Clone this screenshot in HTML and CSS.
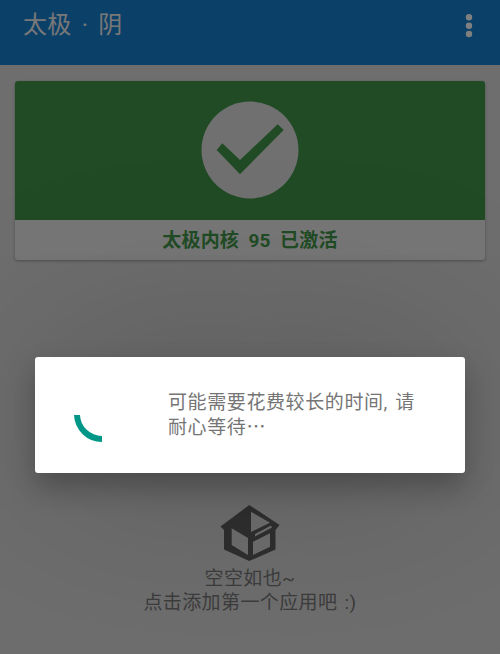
FILE: index.html
```html
<!DOCTYPE html>
<html lang="zh-CN">
<head>
<meta charset="utf-8">
<title>太极 · 阴</title>
<link rel="stylesheet" href="styles.css">
</head>
<body>
<div class="screen">
  <header class="appbar">
    <h1 class="title">太极 · 阴</h1>
    <svg class="menu" width="12" height="28" viewBox="0 0 12 28"><circle cx="6" cy="5.300" r="3.200"/><circle cx="6" cy="13.700" r="3.200"/><circle cx="6" cy="22" r="3.200"/></svg>
  </header>
  <main class="content">
    <section class="card">
      <div class="card-hero">
        <svg class="check" width="98" height="98" viewBox="0 0 98 98"><circle class="check-disc" cx="49" cy="49" r="48.500"/><polygon class="check-mark" points="15.700,49 21.300,42.300 39,59 76.700,23.300 82.700,29 39,73.300"/></svg>
      </div>
      <div class="card-status">太极内核 95 已激活</div>
    </section>
    <div class="empty">
      <svg class="box" width="62" height="60" viewBox="219 503 62 60">
        <path class="box-shape" fill-rule="evenodd" d="M249.300 505 L279.500 525 L275.500 530 V549.500 L249.300 561 L224 549.500 V530 L220.500 526.500 Z M251 511.700 L270 522.700 L251 532 Z M231.700 528.300 L248 538 V555 L231.700 545 Z M255 534 L271 525.500 L272 527.500 L255 536.500 Z M253 541.700 L270 533.300 V546.700 L253 555 Z"/>
      </svg>
      <p class="empty-text">空空如也~<br>点击添加第一个应用吧 :)</p>
    </div>
  </main>
  <div class="scrim">
    <div class="dialog">
      <svg class="spinner" width="40" height="40" viewBox="0 0 40 40"><path d="M7 3 A 25 25 0 0 0 32 27"/></svg>
      <p class="dialog-text">可能需要花费较长的时间, 请耐心等待⋯</p>
    </div>
  </div>
</div>
</body>
</html>
```
FILE: styles.css
```css
* { box-sizing: border-box; }
html, body { margin: 0; padding: 0; }
body {
  font-family: Roboto, "Noto Sans CJK SC", sans-serif;
  background: #dcdcdc;
}
.screen {
  position: relative;
  width: 500px;
  height: 654px;
  overflow: hidden;
  display: flex;
  flex-direction: column;
}
.appbar {
  height: 65px;
  flex: none;
  background: #1680d2;
  display: flex;
  justify-content: space-between;
  padding: 0 24.7px 0 23px;
}
.title {
  margin: 8px 0 0;
  font-size: 24px;
  line-height: 34px;
  font-weight: 400;
  letter-spacing: .3px;
  word-spacing: 3.8px;
  color: #f0f0f0;
}
.menu { margin-top: 12px; fill: #fff; }
.content {
  flex: 1;
  display: flex;
  flex-direction: column;
  padding: 16px 15px 0;
}
.card {
  height: 179px;
  background: #ececec;
  border-radius: 3px;
  overflow: hidden;
  box-shadow: 0 1px 3px rgba(0,0,0,.3);
  flex: none;
}
.card-hero {
  height: 139px;
  background: #409648;
  display: flex;
  justify-content: center;
  padding-top: 20px;
}
.check-disc { fill: #e0e0e0; }
.check-mark { fill: #409648; }
.card-status {
  height: 40px;
  text-align: center;
  line-height: 42px;
  font-size: 19px;
  font-weight: 700;
  letter-spacing: .2px;
  word-spacing: 4.500px;
  color: #409648;
}
.empty {
  margin-top: 243px;
  display: flex;
  flex-direction: column;
  align-items: center;
}
.box { display: block; }
.box-shape { fill: #5e5e5e; }
.empty-text {
  margin: 4px 0 0;
  text-align: center;
  font-size: 19px;
  line-height: 23.500px;
  letter-spacing: .4px;
  word-spacing: 2px;
  color: #7a7a7a;
}
.scrim {
  position: absolute;
  inset: 0;
  background: rgba(0,0,0,.5);
}
.dialog {
  position: absolute;
  left: 35px;
  top: 357px;
  width: 430px;
  height: 116px;
  background: #fff;
  border-radius: 3px;
  box-shadow: 0 14px 28px rgba(0,0,0,.25), 0 0 200px rgba(0,0,0,.25);
  display: flex;
  align-items: center;
  padding-left: 35px;
}
.spinner {
  flex: none;
  margin-top: 34px;
  fill: none;
  stroke: #009688;
  stroke-width: 6;
}
.dialog-text {
  margin: 0 0 0 58px;
  width: 255px;
  font-size: 19px;
  line-height: 25px;
  letter-spacing: .6px;
  word-spacing: 2px;
  color: #757575;
}
```
